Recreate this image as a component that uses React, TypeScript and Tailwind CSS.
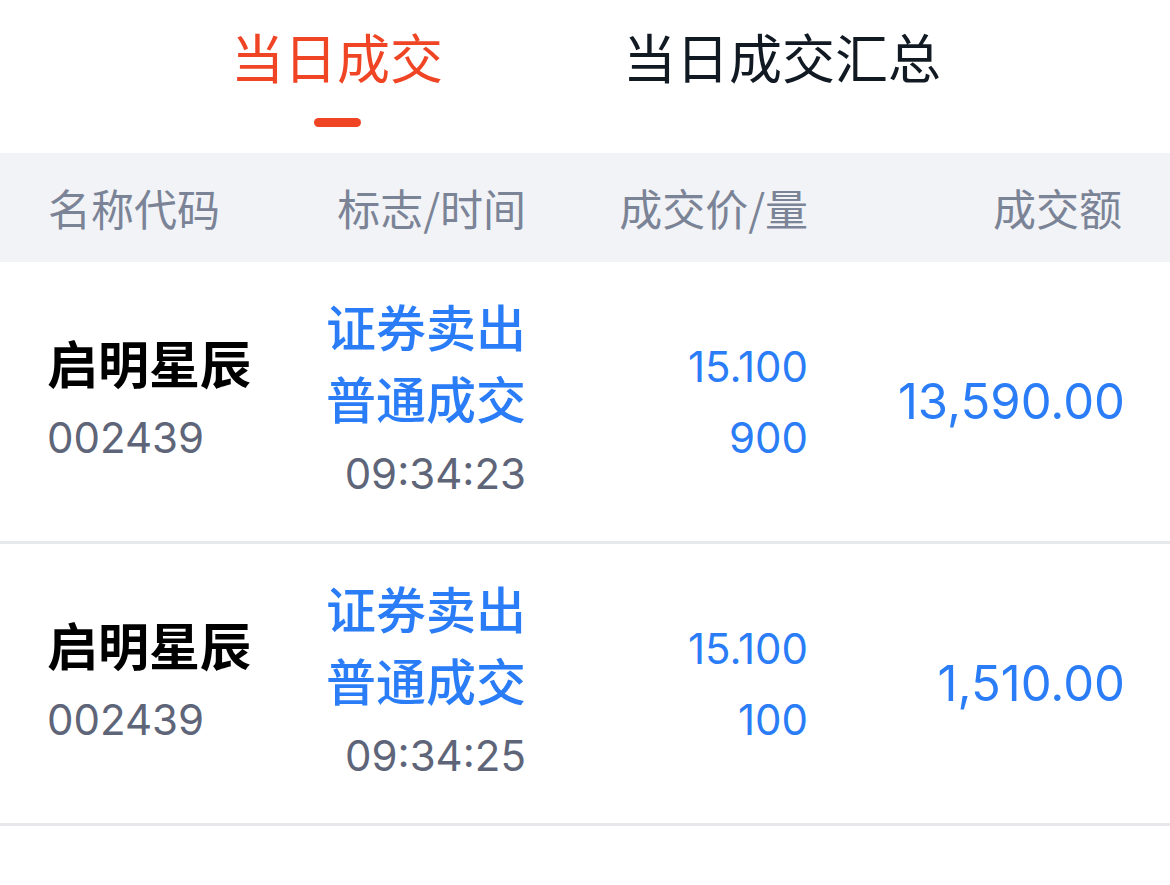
import React from "react";

const trades = [
  { name: "启明星辰", code: "002439", flag: "证券卖出", kind: "普通成交", time: "09:34:23", price: "15.100", qty: "900", amount: "13,590.00" },
  { name: "启明星辰", code: "002439", flag: "证券卖出", kind: "普通成交", time: "09:34:25", price: "15.100", qty: "100", amount: "1,510.00" },
];

const font = { fontFamily: "Inter, 'Noto Sans CJK SC', sans-serif" };

export default function App() {
  return (
    <div className="w-[1170px] h-[885px] bg-white overflow-hidden" style={font}>
      {/* tabs */}
      <div className="h-[153px] flex justify-center gap-[180px] pt-[24px] pl-[2px]">
        <div className="flex flex-col items-center">
          <span className="text-[53px] leading-[72px] text-[#ef4524]">当日成交</span>
          <span className="mt-[22px] w-[47px] h-[9px] rounded-full bg-[#ef4524]" />
        </div>
        <div className="flex flex-col items-center">
          <span className="text-[53px] leading-[72px] text-[#111922]">当日成交汇总</span>
        </div>
      </div>

      {/* header */}
      <div className="h-[109px] bg-[#f2f3f7] grid grid-cols-[240px_238px_282px_314px] items-center pl-[48px] text-[43px] text-[#7b8496] font-['Noto_Sans_CJK_SC',sans-serif]">
        <span>名称代码</span>
        <span className="text-right">标志/时间</span>
        <span className="text-right">成交价/量</span>
        <span className="text-right">成交额</span>
      </div>

      {trades.map((t, i) => (
        <div
          key={i}
          className="h-[282px] border-b-[3px] border-[#e6e8eb] grid grid-cols-[243px_236px_282px_317px] items-center pl-[47px]"
        >
          <div className="flex flex-col">
            <span className="text-[51px] leading-[72px] font-bold text-black">{t.name}</span>
            <span className="text-[42px] leading-[72px] text-[#5e6579]">{t.code}</span>
          </div>
          <div className="flex flex-col items-end">
            <span className="text-[50px] leading-[72px] font-medium text-[#2a7df7]">{t.flag}</span>
            <span className="text-[50px] leading-[72px] font-medium text-[#2a7df7]">{t.kind}</span>
            <span className="text-[42px] leading-[73px] text-[#5e6579]">{t.time}</span>
          </div>
          <div className="flex flex-col items-end text-[42px] leading-[71px] text-[#2a7df7]">
            <span>{t.price}</span>
            <span>{t.qty}</span>
          </div>
          <div className="text-right text-[49px] text-[#2a7df7]">{t.amount}</div>
        </div>
      ))}
    </div>
  );
}
